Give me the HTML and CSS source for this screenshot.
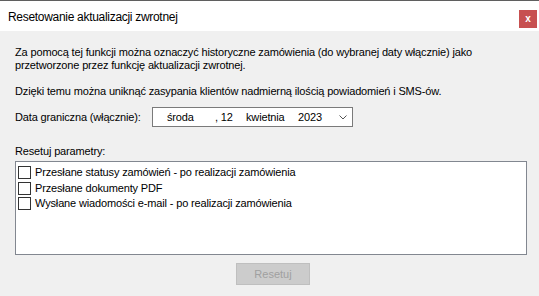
FILE: index.html
```html
<!DOCTYPE html>
<html lang="pl">
<head>
  <meta charset="UTF-8">
  <title>Resetowanie aktualizacji zwrotnej</title>
  <link rel="stylesheet" href="styles.css">
</head>
<body>
  <!-- Dialog window -->
  <div class="window">
    <div class="title-bar">
      <span class="title">Resetowanie aktualizacji zwrotnej</span>
      <span class="close-btn">x</span>
    </div>

    <div class="content">
      <p class="intro">Za pomocą tej funkcji można oznaczyć historyczne zamówienia (do wybranej daty włącznie) jako<br>przetworzone przez funkcję aktualizacji zwrotnej.</p>
      <p class="note">Dzięki temu można uniknąć zasypania klientów nadmierną ilością powiadomień i SMS-ów.</p>

      <div class="date-row">
        <label class="date-label">Data graniczna (włącznie):</label>
        <div class="date-picker">
          <span class="day-name">środa</span>
          <span class="day">, 12</span>
          <span class="month">kwietnia</span>
          <span class="year">2023</span>
          <svg class="chevron" width="8" height="5" viewBox="0 0 8 5">
            <path d="M0.5 0.5 L4 4 L7.5 0.5" fill="none" stroke="#555" stroke-width="1"/>
          </svg>
        </div>
      </div>

      <div class="params-label">Resetuj parametry:</div>
      <div class="list-box">
        <div class="list-item"><span class="check"></span>Przesłane statusy zamówień - po realizacji zamówienia</div>
        <div class="list-item"><span class="check"></span>Przesłane dokumenty PDF</div>
        <div class="list-item"><span class="check"></span>Wysłane wiadomości e-mail - po realizacji zamówienia</div>
      </div>

      <div class="button-row">
        <button class="reset-btn" disabled>Resetuj</button>
      </div>
    </div>
  </div>
</body>
</html>
```

FILE: styles.css
```css
/* Dialog layout */
body {
  margin: 0;
  font-family: 'Liberation Sans', Arial, sans-serif;
  font-size: 11px;
  letter-spacing: -0.15px;
  color: #000;
  background-color: #f0f0f0;
}

.window {
  width: 539px;
  height: 296px;
  background-color: #f0f0f0;
  overflow: hidden;
}

.title-bar {
  display: flex;
  align-items: center;
  justify-content: space-between;
  height: 30px;
  border-top: 1px solid #5f5f5f;
  background-color: #fff;
  padding: 0 2px 0 8px;
}

.title {
  font-size: 12px;
  letter-spacing: -0.3px;
  padding-top: 1px;
}

.close-btn {
  display: flex;
  align-items: center;
  justify-content: center;
  width: 18px;
  height: 18px;
  margin-top: 5px;
  background-color: #c75050;
  color: #fff;
  font-weight: bold;
  font-size: 10px;
  letter-spacing: 0;
  line-height: 1;
}

.content {
  padding: 15px 0 0 15px;
  line-height: 13px;
}

p {
  margin: 0;
}

.intro {
  margin-bottom: 13px;
}

.note {
  margin-bottom: 9px;
}

.date-row {
  display: flex;
  align-items: center;
  height: 20px;
}

.date-label {
  width: 137px;
  padding-top: 1px;
}

.date-picker {
  display: flex;
  align-items: center;
  box-sizing: border-box;
  width: 201px;
  height: 20px;
  border: 1px solid #7a7a7a;
  background-color: #fff;
  padding-left: 14px;
}

.day-name {
  width: 48px;
}

.day {
  width: 31px;
}

.month {
  width: 52px;
}

.year {
  width: 40px;
}

.chevron {
  margin-left: 1px;
}

.params-label {
  margin-top: 18px;
  margin-bottom: 3px;
}

.list-box {
  box-sizing: border-box;
  width: 512px;
  height: 94px;
  border: 1px solid #828790;
  background-color: #fff;
  padding: 3px 0 0 2px;
}

.list-item {
  display: flex;
  align-items: center;
  height: 15.5px;
  white-space: nowrap;
}

.check {
  box-sizing: border-box;
  width: 13px;
  height: 13px;
  border: 1px solid #333;
  background-color: #fff;
  margin-right: 4px;
}

.button-row {
  padding: 8px 0 0 221px;
}

.reset-btn {
  width: 74px;
  height: 22px;
  font-family: inherit;
  font-size: 11px;
  color: #a0a0a0;
  background-color: #cccccc;
  border: 1px solid #bfbfbf;
  padding: 0;
}
```
